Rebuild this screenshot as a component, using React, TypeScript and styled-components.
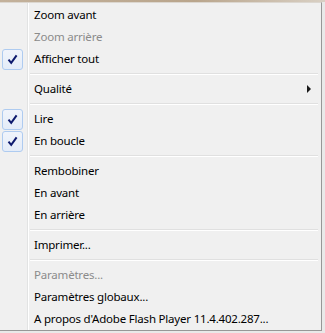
import styled, { createGlobalStyle } from 'styled-components';

const Global = createGlobalStyle`
  html, body {
    margin: 0;
    padding: 0;
    background: #e9e9e9;
  }
  body {
    font-family: 'Noto Sans', 'Open Sans', sans-serif;
    font-size: 11.5px;
    letter-spacing: -0.2px;
  }
`;

const Page = styled.div`
  width: 325px;
  height: 333px;
  overflow: hidden;
  display: flex;
  flex-direction: column;
`;

// strip of the desktop showing above the cropped menu
const Backdrop = styled.div`
  height: 2px;
  background: linear-gradient(to right, #c3b19b, #b9a58c 60%, #d9d0c4);
`;

const Menu = styled.ul`
  list-style: none;
  margin: 0;
  width: 321px;
  padding: 1px 0 0;
  border-top: 1px solid #dcd7d0;
  border-right: 1px solid #979797;
  border-bottom: 1px solid #979797;
  /* gutter line on the left */
  background: linear-gradient(
    to right,
    #f0f0f0 27px,
    #e2e3e3 27px,
    #e2e3e3 28px,
    #ffffff 28px,
    #ffffff 29px,
    #f0f0f0 29px
  );
  display: flex;
  flex-direction: column;
`;

const Item = styled.li<{ $disabled?: boolean }>`
  height: 22px;
  display: flex;
  align-items: center;
  color: ${(p) => (p.$disabled ? '#8b8b8b' : '#000')};
`;

const Gutter = styled.span`
  width: 34px;
  flex: none;
  display: flex;
  align-items: center;
  height: 100%;
`;

const Check = styled.span`
  margin-left: 2px;
  width: 19px;
  height: 19px;
  border: 1px solid #aecbf0;
  border-radius: 3px;
  background: linear-gradient(#f0f4fb, #e4ecf8);
  display: flex;
  align-items: center;
  justify-content: center;
`;

const Label = styled.span`
  flex: 1;
  white-space: nowrap;
  line-height: 22px;
`;

const Arrow = styled.span`
  width: 0;
  height: 0;
  border-top: 4px solid transparent;
  border-bottom: 4px solid transparent;
  border-left: 4px solid #1a1a1a;
  margin-right: 10px;
`;

const Separator = styled.li`
  height: 8px;
  display: flex;
  align-items: center;
  padding-left: 30px;
  padding-right: 3px;
  &::after {
    content: '';
    flex: 1;
    height: 0;
    border-top: 1px solid #e0e0e0;
    border-bottom: 1px solid #ffffff;
  }
`;

function CheckMark() {
  return (
    <svg width="11" height="11" viewBox="0 0 11 11">
      <path d="M1.5 5.6 L4.2 8.8 L9.6 1.4" fill="none" stroke="#0e1a6e" strokeWidth="2" />
    </svg>
  );
}

type Entry =
  | { kind: 'sep' }
  | { kind: 'item'; label: string; checked?: boolean; disabled?: boolean; submenu?: boolean };

const entries: Entry[] = [
  { kind: 'item', label: 'Zoom avant' },
  { kind: 'item', label: 'Zoom arrière', disabled: true },
  { kind: 'item', label: 'Afficher tout', checked: true },
  { kind: 'sep' },
  { kind: 'item', label: 'Qualité', submenu: true },
  { kind: 'sep' },
  { kind: 'item', label: 'Lire', checked: true },
  { kind: 'item', label: 'En boucle', checked: true },
  { kind: 'sep' },
  { kind: 'item', label: 'Rembobiner' },
  { kind: 'item', label: 'En avant' },
  { kind: 'item', label: 'En arrière' },
  { kind: 'sep' },
  { kind: 'item', label: 'Imprimer...' },
  { kind: 'sep' },
  { kind: 'item', label: 'Paramètres...', disabled: true },
  { kind: 'item', label: 'Paramètres globaux...' },
  { kind: 'item', label: "A propos d'Adobe Flash Player 11.4.402.287..." },
];

export default function App() {
  return (
    <Page>
      <Global />
      <Backdrop />
      <Menu>
        {entries.map((e, i) =>
          e.kind === 'sep' ? (
            <Separator key={i} />
          ) : (
            <Item key={i} $disabled={e.disabled}>
              <Gutter>
                {e.checked && (
                  <Check>
                    <CheckMark />
                  </Check>
                )}
              </Gutter>
              <Label>{e.label}</Label>
              {e.submenu && <Arrow />}
            </Item>
          )
        )}
      </Menu>
    </Page>
  );
}
